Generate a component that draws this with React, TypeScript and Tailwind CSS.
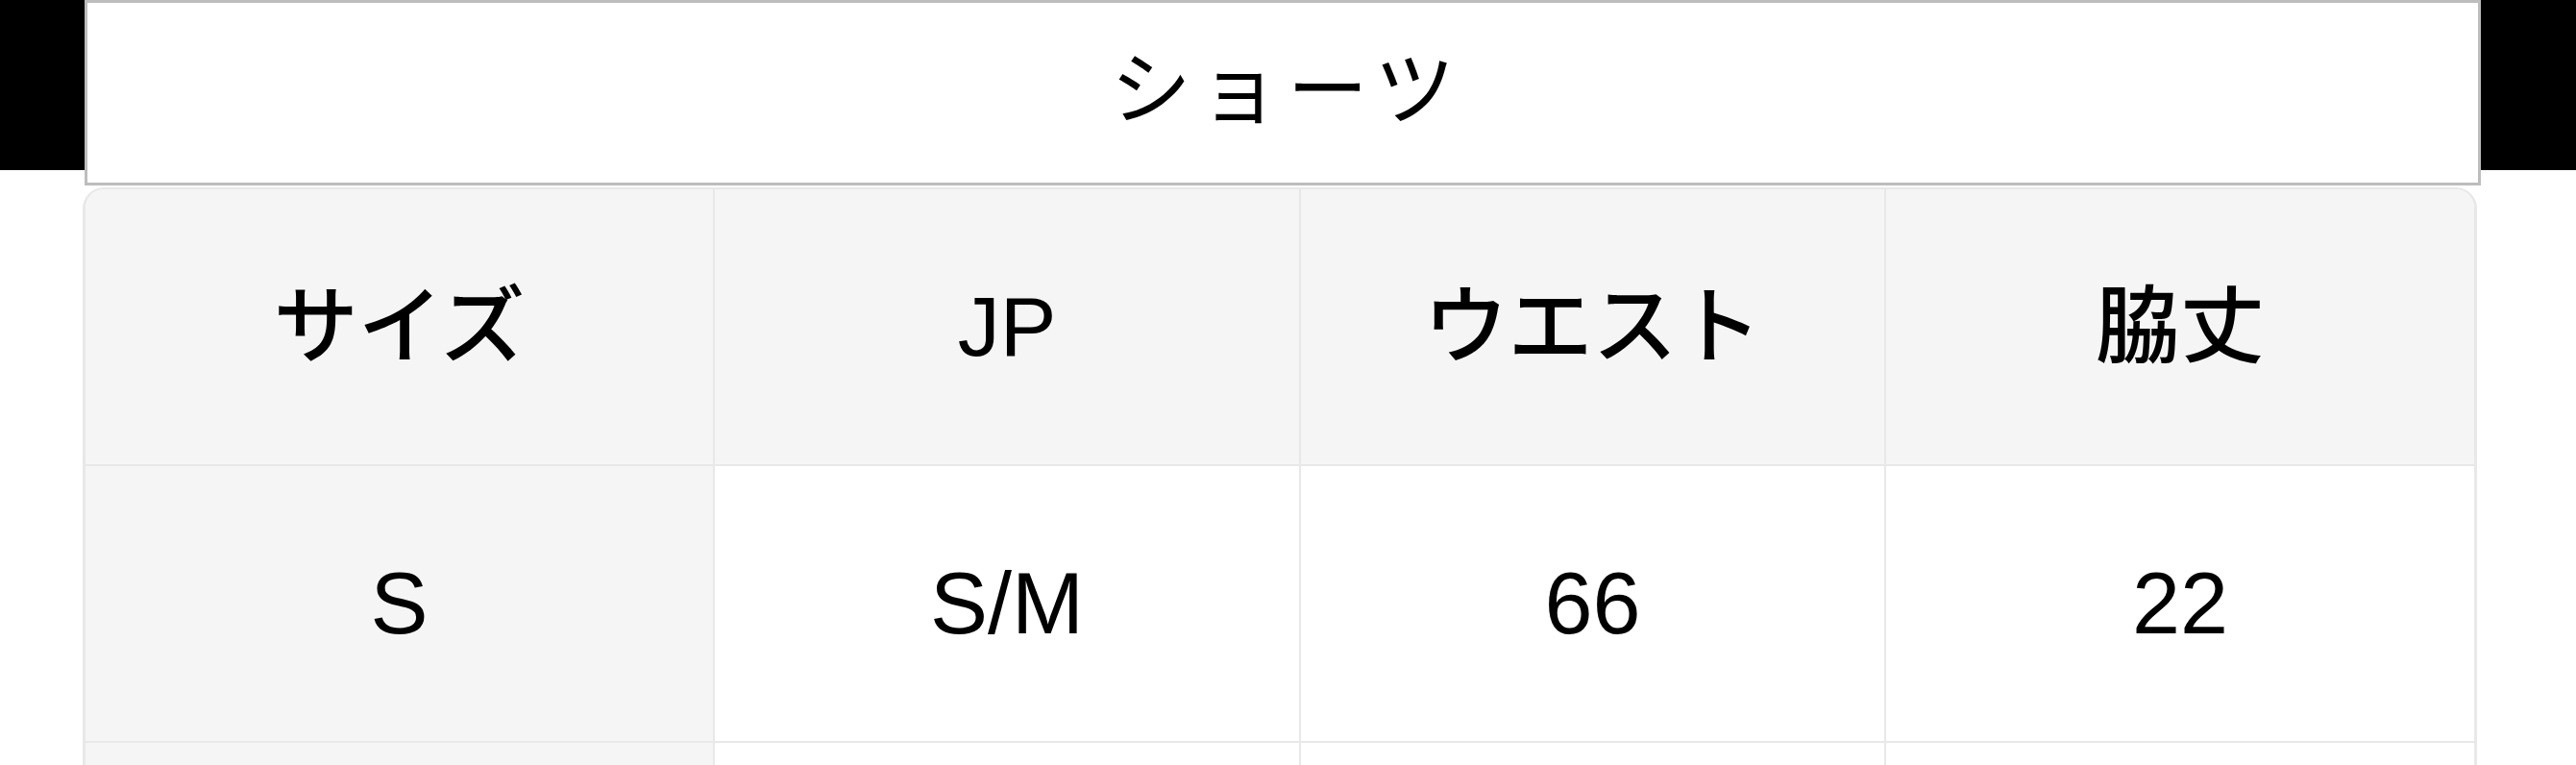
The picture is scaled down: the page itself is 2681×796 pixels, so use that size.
import React from 'react'

const headers = ['サイズ', 'JP', 'ウエスト', '脇丈']

const rows = [
    ['S', 'S/M', '66', '22'],
    ['', '', '', ''],
]

const font = { fontFamily: '"Liberation Sans", "Noto Sans CJK JP", sans-serif' }

export default function App() {
    return (
        <div className="bg-white w-[2681px] min-h-[796px] text-black">
            {/* Title bar */}
            <div className="flex items-start">
                <div className="w-[88px] h-[177px] bg-black shrink-0"></div>
                <div className="w-[2494px] h-[193px] shrink-0 border-[3px] border-[#bdbdbd] bg-white flex items-center justify-center">
                    <h1
                        className="text-[84px] leading-none font-normal tracking-[8px] pl-[8px] pb-[20px]"
                        style={{ fontFamily: '"Noto Sans CJK JP", sans-serif' }}
                    >
                        ショーツ
                    </h1>
                </div>
                <div className="flex-1 h-[177px] bg-black"></div>
            </div>

            {/* Size table */}
            <div className="ml-[86px] mt-[2px] w-[2492px] border-t-2 border-l-[3px] border-r-[3px] border-[#e8e8e8] rounded-t-[22px] overflow-hidden">
                <div className="grid grid-cols-[655px_610px_609px_1fr]" style={font}>
                    {headers.map((h, i) => (
                        <div
                            key={h}
                            className={`h-[288px] bg-[#f5f5f5] border-b-2 border-[#e8e8e8] flex items-center justify-center text-[88px] font-medium leading-none ${i < 3 ? 'border-r-2' : ''}`}
                        >
                            {h}
                        </div>
                    ))}
                    {rows.map((row, r) =>
                        row.map((cell, i) => (
                            <div
                                key={`${r}-${i}`}
                                className={`h-[288px] border-b-2 border-[#e8e8e8] flex items-center justify-center text-[90px] leading-none ${i === 0 ? 'bg-[#f5f5f5]' : 'bg-white'} ${i < 3 ? 'border-r-2' : ''}`}
                            >
                                {cell}
                            </div>
                        ))
                    )}
                </div>
            </div>
        </div>
    )
}
